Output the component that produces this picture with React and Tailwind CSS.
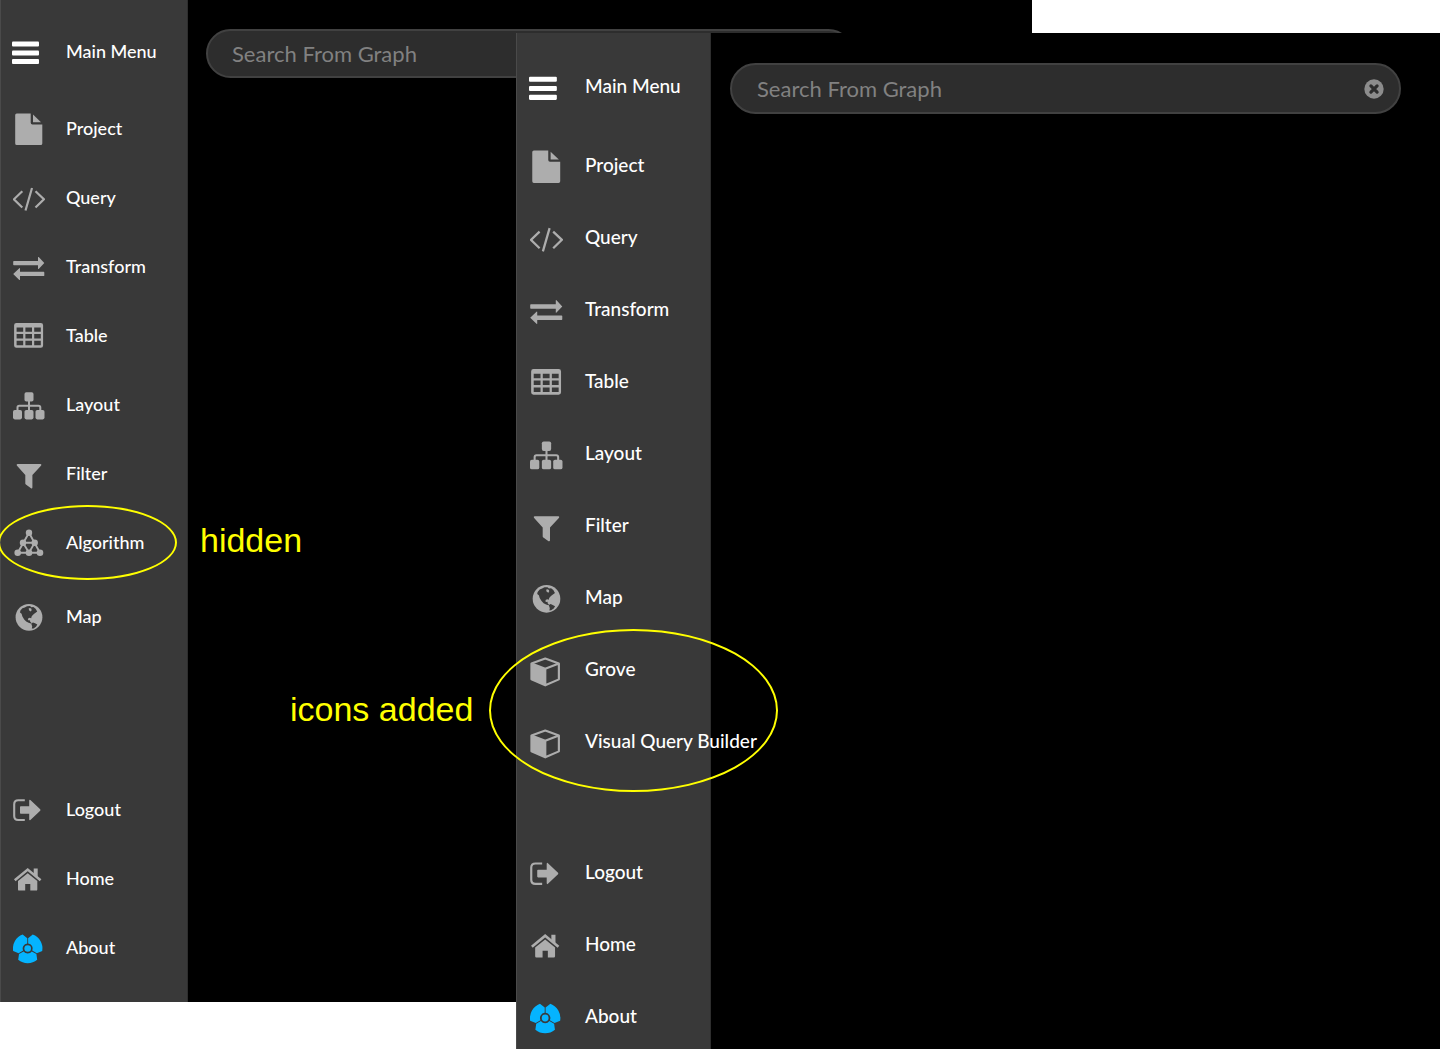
import React from "react";

const icons = {
  menu: (
    <g>
      <rect x="0" y="5.5" width="27" height="5" rx="1" />
      <rect x="0" y="14.5" width="27" height="5" rx="1" />
      <rect x="0" y="23" width="27" height="5" rx="1" />
    </g>
  ),
  project: (
    <g>
      <path d="M3.8 .4H17.7V9.7A1.7 1.7 0 0 0 19.4 11.4H29.3V30.4A1.6 1.6 0 0 1 27.7 32H3.8A1.6 1.6 0 0 1 2.2 30.4V2A1.6 1.6 0 0 1 3.8 .4Z" />
      <path d="M20 1.6 28 9.2H20Z" />
    </g>
  ),
  query: (
    <path d="M9.3 9.3.9 17.3 9.3 25.5M19 6 12.5 28.5M22.5 9.3 30.9 17.3 22.5 25.5" fill="none" stroke="currentColor" strokeWidth="2.2" />
  ),
  transform: (
    <path d="M.9 10H25V6.4Q25 5.6 25.7 6.1L31.3 12 25.7 17.9Q25 18.4 25 17.6V14.3H.9Q.2 14.3 .2 13.6V10.7Q.2 10 .9 10ZM30.6 20.8H7V17.5Q7 16.7 6.3 17.2L.2 23 6.3 28.9Q7 29.4 7 28.6V25.1H30.6Q31.3 25.1 31.3 24.4V21.5Q31.3 20.8 30.6 20.8Z" />
  ),
  table: (
    <path
      fillRule="evenodd"
      d="M3.4 3H27.8A2.3 2.3 0 0 1 30.1 5.3V25.5A2.3 2.3 0 0 1 27.8 27.8H3.4A2.3 2.3 0 0 1 1.1 25.5V5.3A2.3 2.3 0 0 1 3.4 3ZM3.6 7.4V11.8H10.2V7.4ZM12.4 7.4V11.8H19V7.4ZM21.2 7.4V11.8H27.8V7.4ZM3.6 14V18.4H10.2V14ZM12.4 14V18.4H19V14ZM21.2 14V18.4H27.8V14ZM3.6 20.8V25.2H10.2V20.8ZM12.4 20.8V25.2H19V20.8ZM21.2 20.8V25.2H27.8V20.8Z"
    />
  ),
  layout: (
    <g>
      <rect x="11.5" y="3.3" width="9" height="9.2" rx="1.8" />
      <rect x="0" y="21" width="9" height="9.4" rx="1.8" />
      <rect x="11.5" y="21" width="9" height="9.4" rx="1.8" />
      <rect x="22.5" y="21" width="9" height="9.4" rx="1.8" />
      <path d="M16 12V22M4.5 22V18.5Q4.5 16.7 6.3 16.7H25.5Q27.3 16.7 27.3 18.5V22" fill="none" stroke="currentColor" strokeWidth="2" />
    </g>
  ),
  filter: (
    <path d="M4.5 6H27.6Q28.8 6.4 28.2 7.5L19.4 17V29.4Q19.2 30.8 18 30.2L12.9 26.6Q12.3 26.2 12.3 25.5V17L3.8 7.5Q3.2 6.4 4.5 6Z" />
  ),
  algorithm: (
    <g>
      <path d="M16 5.7 4.7 25.7H27ZM10 15.7H21.7L16 25.7Z" fill="none" stroke="currentColor" strokeWidth="1.9" />
      <circle cx="16" cy="5.7" r="3.2" />
      <circle cx="10" cy="15.7" r="3.2" />
      <circle cx="21.7" cy="15.7" r="3.2" />
      <circle cx="4.7" cy="25.7" r="3.3" />
      <circle cx="16" cy="25.7" r="3.3" />
      <circle cx="27" cy="25.7" r="3.3" />
    </g>
  ),
  map: (
    <g>
      <circle cx="16" cy="16.3" r="13.4" />
      <path
        className="fill-[#393939]"
        d="M7.4 9.6 9.4 7.2 11.8 6.4 14 5.2 17 5 18.4 6.2 20.4 6 22.6 7.8 24.2 10.6 22.6 11.8 21.2 12.8 19.6 14.2 18.6 15.6 18.2 17.2 16.8 16.8 15.4 17.2 14.8 18.6 15.8 19.4 17 19.2 17.2 20.8 18.4 21.8 17.8 22.6 15.6 21.8 13.2 20.6 11.2 18.4 9.4 15.6 8.6 12.8 7 11.6Z"
      />
      <path d="M15.6 7.4 17 7 18.4 7.8 18.6 9.2 17.8 10.4 16.2 9.4Z" />
      <path className="fill-[#393939]" d="M18.2 22.4 20 21.4 22 22.2 24.3 23.6 23 25.8 20.5 27.4 18.8 27.6 19.2 25.5Z" />
    </g>
  ),
  cube: (
    <g>
      <path d="M14.8 4.4 28 9.2V24.6L14.8 30.4 1.4 24.6V9.2ZM1.4 9.2 14.8 14.3 28 9.2M14.8 14.3V30.4" fill="none" stroke="currentColor" strokeWidth="2.1" strokeLinejoin="round" />
      <path d="M1.4 9.2 14.8 14.3V30.4L1.4 24.6Z" />
    </g>
  ),
  logout: (
    <g>
      <path d="M11.8 6.3H5.2Q1.2 6.3 1.2 10.3V22Q1.2 26 5.2 26H11.8" fill="none" stroke="currentColor" strokeWidth="2.1" />
      <path d="M7.8 12.3H16.2V6.5Q16.4 5.2 17.4 6L27.2 15.3Q27.7 16 27.2 16.7L17.4 26Q16.4 26.8 16.2 25.5V19.8H7.8Q7 19.8 7 19V13.1Q7 12.3 7.8 12.3Z" />
    </g>
  ),
  home: (
    <g>
      <path d="M1.8 17.2 14.7 6.6 27.6 17.2" fill="none" stroke="currentColor" strokeWidth="2.6" />
      <path d="M20.7 5.6H24.7V15L20.7 11.6ZM14.7 10.2 24.3 18V26.4Q24.3 27.6 23.1 27.6H17.3V21H12.2V27.6H6.2Q5 27.6 5 26.4V18Z" />
    </g>
  ),
  about: (
    <g className="text-[#05b4ff]" fill="currentColor">
      {[0, 120, 240].map((angle) => (
        <path
          key={angle}
          transform={`rotate(${angle} 14.7 16.5)`}
          d="M5.2 27.8A14.8 14.8 0 0 0 24.2 27.8L23.4 22 18.8 19.4A5 5 0 0 1 10.6 19.4L6 22Z"
        />
      ))}
      <circle cx="14.7" cy="16.5" r="3.3" />
    </g>
  ),
};

const Icon = ({ name, className }) => (
  <svg viewBox="0 0 32 32" fill="currentColor" aria-hidden="true" className={`shrink-0 ${className}`}>
    {icons[name]}
  </svg>
);

const before = {
  sidebar: "w-[188px] pb-[30px] text-[18px]",
  menu: "mt-7 pl-[11px] gap-[22px]",
  list: "mt-[29px] gap-[21px]",
  footer: "gap-[21px]",
  row: "pl-3 gap-[21px]",
  icon: "size-8",
  search: "ml-[18px] mr-[179px] mt-[29px] h-[49px] pl-6 pr-6 text-[22px]",
};

const after = {
  sidebar: "w-[195px] pb-2 text-[19px]",
  menu: "mt-[30px] pl-3 gap-[23px]",
  list: "mt-[31px] gap-6",
  footer: "gap-6",
  row: "pl-[13px] gap-[22px]",
  icon: "size-[33px]",
  search: "ml-[19px] mr-[39px] mt-[30px] h-[51px] pl-[25px] pr-[15px] text-[22px]",
};

const beforeItems = [
  ["project", "Project"],
  ["query", "Query"],
  ["transform", "Transform"],
  ["table", "Table"],
  ["layout", "Layout"],
  ["filter", "Filter"],
  ["algorithm", "Algorithm"],
  ["map", "Map", "mt-[5px]"],
];

const afterItems = [
  ["project", "Project"],
  ["query", "Query"],
  ["transform", "Transform"],
  ["table", "Table"],
  ["layout", "Layout"],
  ["filter", "Filter"],
  ["map", "Map"],
  ["cube", "Grove"],
  ["cube", "Visual Query Builder"],
];

const footerItems = [
  ["logout", "Logout"],
  ["home", "Home"],
  ["about", "About"],
];

function Row({ icon, label, theme, className = "" }) {
  return (
    <li className={className}>
      <button type="button" className={`flex h-12 w-full items-center whitespace-nowrap text-left ${theme.row}`}>
        <Icon name={icon} className={`text-[#adadad] ${theme.icon}`} />
        <span className="pb-0.5">{label}</span>
      </button>
    </li>
  );
}

function GraphWindow({ theme, items, className, closable }) {
  return (
    <section className={`flex min-w-0 bg-black font-['Lato',sans-serif] ${className}`}>
      <nav
        className={`flex shrink-0 flex-col border-x border-l-[#4a4a4a] border-r-[#2e2e2e] bg-[#393939] font-medium text-white ${theme.sidebar}`}
      >
        <button type="button" className={`flex h-12 shrink-0 items-center whitespace-nowrap text-left ${theme.menu}`}>
          <Icon name="menu" className={theme.icon} />
          <span className="pb-0.5">Main Menu</span>
        </button>
        <ul className={`flex flex-col ${theme.list}`}>
          {items.map(([icon, label, extra]) => (
            <Row key={label} icon={icon} label={label} theme={theme} className={extra} />
          ))}
        </ul>
        <ul className={`mt-auto flex flex-col ${theme.footer}`}>
          {footerItems.map(([icon, label]) => (
            <Row key={label} icon={icon} label={label} theme={theme} />
          ))}
        </ul>
      </nav>
      <div
        className={`flex min-w-0 flex-1 items-center rounded-full border-2 border-[#414141] bg-[#2d2d2d] ${theme.search}`}
      >
        <input
          type="text"
          aria-label="Search From Graph"
          placeholder="Search From Graph"
          className="min-w-0 flex-1 bg-transparent text-white outline-none placeholder:text-[#818181]"
        />
        {closable && (
          <button type="button" aria-label="Clear search">
            <svg viewBox="0 0 20 20" className="size-5">
              <circle cx="10" cy="10" r="9.7" className="fill-[#8c8c8c]" />
              <path d="M6.9 6.9 13.1 13.1M13.1 6.9 6.9 13.1" className="stroke-[#2d2d2d]" strokeWidth="3.2" strokeLinecap="round" />
            </svg>
          </button>
        )}
      </div>
    </section>
  );
}

export default function App() {
  return (
    <main className="relative grid min-h-screen grid-cols-1 overflow-hidden bg-white">
      <GraphWindow theme={before} items={beforeItems} className="col-start-1 row-start-1 mr-[408px] mb-[47px]" />
      <GraphWindow theme={after} items={afterItems} closable className="z-10 col-start-1 row-start-1 ml-[516px] mt-[33px]" />

      <div className="pointer-events-none absolute left-[-2px] top-[505px] z-20 h-[75px] w-[179px] rounded-[50%] border-2 border-[#ffff00]" />
      <p className="absolute left-[200px] top-[520px] z-20 font-['Liberation_Sans',sans-serif] text-[34px] leading-10 text-[#ffff00]">hidden</p>

      <div className="pointer-events-none absolute left-[489px] top-[629px] z-20 h-[163px] w-[289px] rounded-[50%] border-2 border-[#ffff00]" />
      <p className="absolute left-[290px] top-[689px] z-20 font-['Liberation_Sans',sans-serif] text-[34px] leading-10 text-[#ffff00]">icons added</p>
    </main>
  );
}
